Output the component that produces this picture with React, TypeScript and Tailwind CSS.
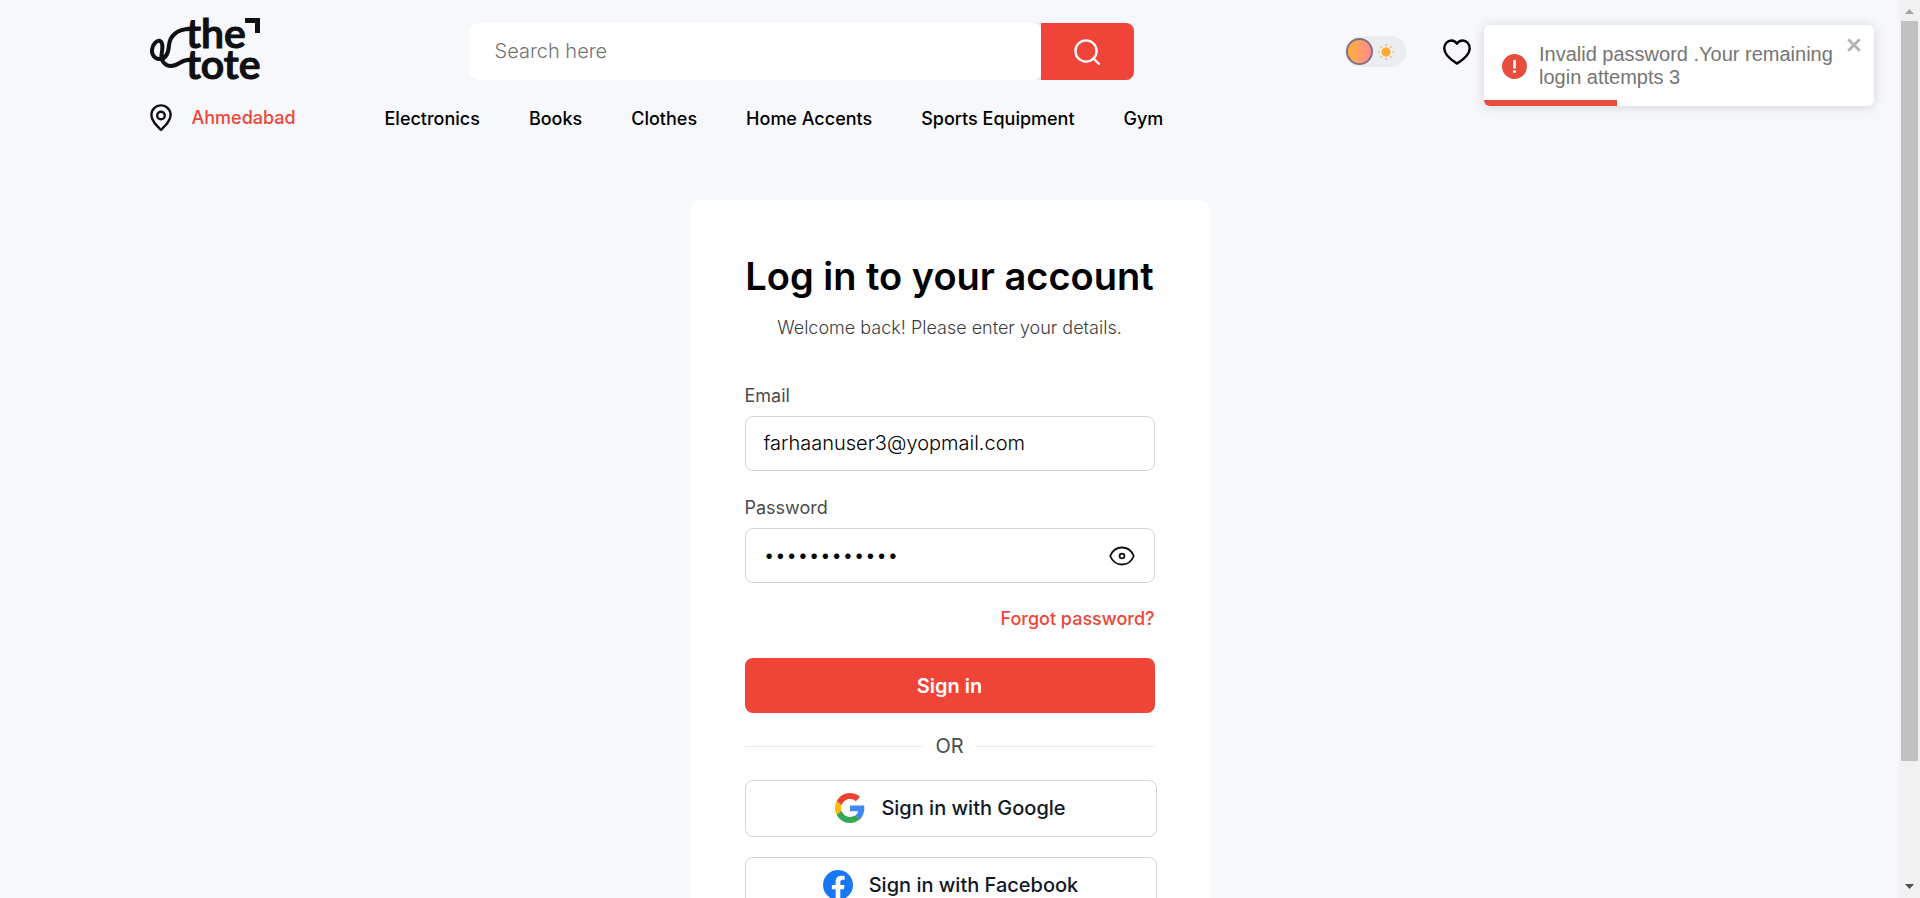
import React, { useState } from "react";

const categories = ["Electronics", "Books", "Clothes", "Home Accents", "Sports Equipment", "Gym"];

function Logo() {
  return (
    <a href="#" aria-label="the tote" className="block text-[#0f1011]">
      <svg width="111" height="66" viewBox="0 0 111 66" fill="none" className="overflow-visible">
        <g
          fill="currentColor"
          stroke="currentColor"
          strokeWidth="1.200"
          fontFamily="Lato, sans-serif"
          fontWeight="600"
          fontSize="41"
        >
          <text x="36" y="30">the</text>
          <text x="36" y="61">tote</text>
        </g>
        <path d="M95 0H110V15H105V5H95Z" fill="currentColor" />
        <path
          d="M46 11H40C27 11 20 18 19 27C18.500 34 17 40 11 41C5 41.500 1.500 37 2 32C2.500 26 7 22 10 23C14 25 12 33 11.500 37C11 43 15 48 21 48C28 48 31 42 38 42H46"
          stroke="currentColor"
          strokeWidth="4"
          strokeLinecap="round"
          strokeLinejoin="round"
        />
      </svg>
    </a>
  );
}

function PinIcon() {
  return (
    <svg width="22" height="28" viewBox="0 0 22 28" fill="none" stroke="#111" strokeWidth="2.4" aria-hidden="true">
      <path d="M11 26C6 21 1.4 16.500 1.400 11A9.600 9.600 0 0 1 20.600 11C20.600 16.500 16 21 11 26Z" strokeLinejoin="round" />
      <circle cx="11" cy="11.500" r="3.800" />
    </svg>
  );
}

function SearchIcon() {
  return (
    <svg width="26" height="26" viewBox="0 0 26 26" fill="none" stroke="#fff" strokeWidth="2.4" aria-hidden="true">
      <circle cx="12" cy="12" r="10.600" />
      <path d="M19.500 19.500L25 25" strokeLinecap="round" />
    </svg>
  );
}

function HeartIcon() {
  return (
    <svg width="28" height="26" viewBox="0 0 28 26" fill="none" stroke="#000" strokeWidth="2.4" aria-hidden="true">
      <path
        d="M14 24.500C10 22 1.300 17 1.300 9.500C1.300 5 4.500 1.500 8.300 1.500C10.900 1.500 12.900 2.800 14 4.700C15.100 2.800 17.100 1.500 19.700 1.500C23.500 1.500 26.700 5 26.700 9.500C26.700 17 18 22 14 24.500Z"
        strokeLinejoin="round"
      />
    </svg>
  );
}

function SunIcon() {
  return (
    <svg width="16" height="16" viewBox="0 0 16 16" stroke="#fbab2c" strokeWidth="1.2" aria-hidden="true">
      <circle cx="8" cy="8" r="4.500" fill="#fbab2c" stroke="none" />
      <path d="M8 .2V2M8 14V15.800M.2 8H2M14 8H15.800M2.500 2.500L3.700 3.700M12.300 12.300L13.500 13.500M13.500 2.500L12.300 3.700M3.700 12.300L2.500 13.500" />
    </svg>
  );
}

function EyeIcon() {
  return (
    <svg width="26" height="20" viewBox="0 0 26 20" fill="none" stroke="#111" strokeWidth="1.800" aria-hidden="true">
      <path d="M1.200 10C3.500 4.500 7.500 1.500 13 1.500S22.500 4.500 24.800 10C22.500 15.500 18.500 18.500 13 18.500S3.500 15.500 1.200 10Z" strokeLinejoin="round" />
      <circle cx="13" cy="10" r="2.400" />
    </svg>
  );
}

function GoogleIcon() {
  return (
    <svg width="30" height="30" viewBox="0 0 48 48" aria-hidden="true">
      <path fill="#EA4335" d="M24 9.500c3.540 0 6.710 1.220 9.210 3.600l6.850-6.850C35.900 2.380 30.470 0 24 0 14.620 0 6.510 5.380 2.560 13.220l7.980 6.190C12.430 13.720 17.740 9.500 24 9.500z" />
      <path fill="#4285F4" d="M46.980 24.550c0-1.570-.15-3.090-.38-4.550H24v9.020h12.940c-.58 2.960-2.260 5.480-4.780 7.180l7.730 6c4.510-4.180 7.090-10.360 7.090-17.650z" />
      <path fill="#FBBC05" d="M10.530 28.590c-.48-1.450-.76-2.990-.76-4.590s.27-3.140.76-4.590l-7.980-6.190C.92 16.460 0 20.120 0 24c0 3.880.92 7.540 2.560 10.780l7.970-6.190z" />
      <path fill="#34A853" d="M24 48c6.480 0 11.930-2.130 15.890-5.810l-7.730-6c-2.150 1.450-4.920 2.300-8.160 2.300-6.260 0-11.570-4.220-13.470-9.910l-7.980 6.190C6.510 42.620 14.620 48 24 48z" />
    </svg>
  );
}

function FacebookIcon() {
  return (
    <svg width="30" height="30" viewBox="0 0 24 24" aria-hidden="true">
      <circle cx="12" cy="12" r="12" fill="#1877F2" />
      <path fill="#fff" d="M16.700 15.470L17.200 12h-3.330V9.750c0-.95.460-1.870 1.960-1.870h1.510V4.920s-1.370-.23-2.690-.23c-2.740 0-4.530 1.660-4.530 4.670V12H7.080v3.470h3.040V24h3.750v-8.530z" />
    </svg>
  );
}

function Toast({ onClose }: { onClose: () => void }) {
  return (
    <div role="alert" className="absolute right-[25px] top-[25px] z-10 w-[390px] overflow-hidden rounded-md bg-white shadow-[0_1px_12px_rgba(0,0,0,0.15)]">
      <div className="flex items-center gap-3 px-[18px] pb-[17px] pt-[18px]">
        <svg width="25" height="25" viewBox="0 0 25 25" className="shrink-0" aria-hidden="true">
          <circle cx="12.500" cy="12.500" r="12.500" fill="#e74c3c" />
          <path d="M12.500 7V13.500" stroke="#fff" strokeWidth="2.600" strokeLinecap="round" />
          <circle cx="12.500" cy="17.500" r="1.600" fill="#fff" />
        </svg>
        <p className="w-[300px] font-['Liberation_Sans',Arial,sans-serif] text-[20px] leading-[23px] text-[#757575]">
          Invalid password .Your remaining login attempts 3
        </p>
      </div>
      <button type="button" aria-label="Close" onClick={onClose} className="absolute right-3 top-3 p-px">
        <svg width="14" height="14" viewBox="0 0 14 14" stroke="#b3b3b3" strokeWidth="2.800" aria-hidden="true">
          <path d="M1.200 1.200L12.800 12.800M12.800 1.200L1.200 12.800" />
        </svg>
      </button>
      <div className="absolute bottom-0 left-0 h-[6px] w-[133px] bg-[#e74c3c]" />
    </div>
  );
}

function Header() {
  return (
    <header className="mx-auto w-full max-w-[1600px]">
      <div className="flex items-start pt-[18px]">
        <div className="w-[319px] shrink-0">
          <Logo />
        </div>
        <form role="search" className="mt-[5px] flex h-[57px] w-[665px] overflow-hidden rounded-lg bg-[#e9eaee]">
          <input
            type="search"
            aria-label="Search"
            placeholder="Search here"
            className="min-w-0 flex-1 rounded-lg bg-white px-[26px] pb-[2px] text-[20px] font-light text-black outline-none placeholder:text-[#757575]"
          />
          <button type="button" aria-label="Search" className="flex w-[93px] items-center justify-center bg-[#f04438]">
            <SearchIcon />
          </button>
        </form>
        <div className="ml-auto mt-[18px] flex items-center gap-[37px] pr-[279px]">
          <button type="button" role="switch" aria-checked="false" aria-label="Dark mode" className="flex h-[31px] w-[61px] items-center gap-[5px] rounded-full bg-[#ebecf0] px-px">
            <span className="h-[27px] w-[27px] rounded-full border-2 border-[#80708a] bg-linear-to-r from-[#fdb027] to-[#ff8a8a]" />
            <SunIcon />
          </button>
          <a href="#" aria-label="Wishlist">
            <HeartIcon />
          </a>
        </div>
      </div>
      <div className="mt-[17px] flex items-center">
        <a href="#" className="flex w-[235px] items-center gap-5 text-[18px] leading-8 font-medium text-[#f04438]">
          <PinIcon />
          Ahmedabad
        </a>
        <nav className="flex items-center gap-[49px] pt-[2px] text-[18px] leading-8 font-medium text-black">
          {categories.map((c) => (
            <a key={c} href="#">
              {c}
            </a>
          ))}
        </nav>
      </div>
    </header>
  );
}

const fieldClass =
  "h-[55px] w-full rounded-lg border border-[#d0d5dd] bg-white px-[18px] pb-[2px] text-[20px] font-light text-black outline-none";
const socialClass =
  "flex h-[57px] w-[412px] items-center justify-center gap-4 rounded-lg border border-[#d0d5dd] bg-white pb-[2px] text-[20px] font-medium text-[#101828]";

function LoginCard() {
  const [visible, setVisible] = useState(false);
  return (
    <section className="mx-auto mt-[65px] w-full max-w-[520px] rounded-xl bg-white px-[55px] pb-[55px] pt-[51px]">
      <h1 className="text-center text-[38px] leading-[50px] font-semibold whitespace-nowrap text-black">Log in to your account</h1>
      <p className="mt-[15px] text-center text-[18px] leading-6 font-light text-[#3d3d3d]">Welcome back! Please enter your details.</p>
      <form>
        <label htmlFor="email" className="mt-11 block text-[18px] leading-6 text-[#4b4b4b]">
          Email
        </label>
        <input id="email" type="email" defaultValue="farhaanuser3@yopmail.com" className={`mt-2 ${fieldClass}`} />
        <label htmlFor="password" className="mt-[25px] block text-[18px] leading-6 text-[#4b4b4b]">
          Password
        </label>
        <div className="relative mt-2">
          <input id="password" type={visible ? "text" : "password"} defaultValue="abcdefghijkl" className={fieldClass} />
          <button
            type="button"
            aria-label="Show password"
            onClick={() => setVisible(!visible)}
            className="absolute inset-y-0 right-5 flex items-center"
          >
            <EyeIcon />
          </button>
        </div>
        <div className="mt-6 text-right text-[18px] leading-6 font-medium text-[#f04438]">
          <a href="#">Forgot password?</a>
        </div>
        <button type="button" className="mt-[27px] h-[55px] w-full rounded-lg bg-[#f04438] text-[20px] font-semibold text-white">
          Sign in
        </button>
        <div className="mt-[17px] flex items-center gap-3 text-[20px] leading-8 text-[#4b4b4b]">
          <span className="h-px flex-1 bg-[#eaeaec]" />
          OR
          <span className="h-px flex-1 bg-[#eaeaec]" />
        </div>
        <button type="button" className={`mt-[18px] ${socialClass}`}>
          <GoogleIcon />
          Sign in with Google
        </button>
        <button type="button" className={`mt-5 ${socialClass}`}>
          <FacebookIcon />
          Sign in with Facebook
        </button>
      </form>
    </section>
  );
}

function ScrollRail() {
  return (
    <div aria-hidden="true" className="flex w-[21px] shrink-0 flex-col items-center bg-[#f1f1f1]">
      <svg width="21" height="21" viewBox="0 0 21 21" className="shrink-0">
        <path d="M6 14H15L10.500 9Z" fill="#a3a3a3" />
      </svg>
      <div className="flex w-full flex-1 flex-col px-[2px]">
        <div className="grow-[32] basis-0 bg-[#c1c1c1]" />
        <div className="grow-[5] basis-0" />
      </div>
      <svg width="21" height="21" viewBox="0 0 21 21" className="shrink-0">
        <path d="M6 7H15L10.500 12Z" fill="#505050" />
      </svg>
    </div>
  );
}

export default function App() {
  const [toast, setToast] = useState(true);
  return (
    <div className="flex h-screen bg-[#f7f8fc] font-['Inter',sans-serif]">
      <div className="relative min-w-0 flex-1">
        <main className="h-full overflow-y-auto pb-16 [scrollbar-width:none]">
          <Header />
          <LoginCard />
        </main>
        {toast && <Toast onClose={() => setToast(false)} />}
      </div>
      <ScrollRail />
    </div>
  );
}
